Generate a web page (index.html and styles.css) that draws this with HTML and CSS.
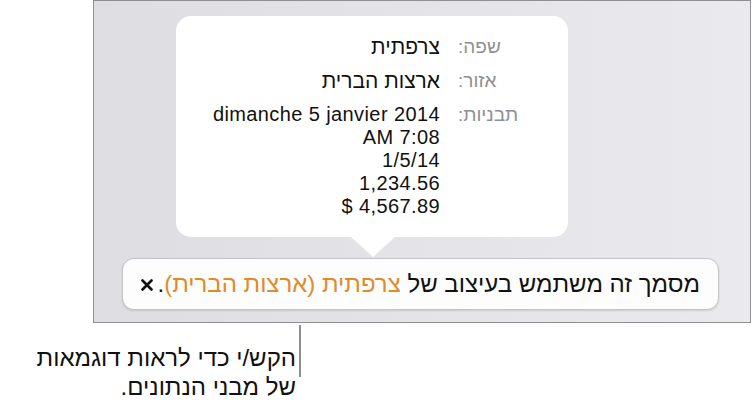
FILE: index.html
```html
<!DOCTYPE html>
<html lang="he">
<head>
    <meta charset="UTF-8">
    <title>תבניות שפה ואזור</title>
    <link rel="stylesheet" href="styles.css">
</head>
<body>
    <div class="frame">
        <div class="popover">
            <div class="row">
                <div class="label">שפה:</div>
                <div class="value heb">צרפתית</div>
            </div>
            <div class="row">
                <div class="label">אזור:</div>
                <div class="value heb">ארצות הברית</div>
            </div>
            <div class="row">
                <div class="label">תבניות:</div>
                <div class="value samples">
                    <div dir="ltr">dimanche 5 janvier 2014</div>
                    <div dir="ltr">AM 7:08</div>
                    <div dir="ltr">1/5/14</div>
                    <div dir="ltr">1,234.56</div>
                    <div dir="ltr">$ 4,567.89</div>
                </div>
            </div>
        </div>

        <div class="notice">
            <div class="notice-text">מסמך זה משתמש בעיצוב של <span class="accent">צרפתית (ארצות הברית)</span>.</div>
            <div class="close">
                <svg width="12" height="12" viewBox="0 0 12 12">
                    <path d="M1.5 1.5 L10.5 10.5 M10.5 1.5 L1.5 10.5" stroke="#111" stroke-width="2.6" stroke-linecap="round"/>
                </svg>
            </div>
        </div>
    </div>

    <div class="callout">
        <div class="callout-line"></div>
        <p class="caption">הקש/י כדי לראות דוגמאות<br>של מבני הנתונים.</p>
    </div>
</body>
</html>
```

FILE: styles.css
```css
body {
    margin: 0;
    font-family: "Liberation Sans", sans-serif;
    color: #111;
    background: #fff;
}
.frame {
    margin-left: 93px;
    width: 658px;
    height: 323px;
    box-sizing: border-box;
    border: 1px solid #8e8e93;
    background: linear-gradient(to right, #dedee2, #eaeaee);
    padding-top: 15px;
}
.popover {
    position: relative;
    margin-left: 82px;
    width: 392px;
    box-sizing: border-box;
    background: #fff;
    border-radius: 15px;
    padding: 19px 40px 19px 0;
    direction: rtl;
    font-size: 20px;
    line-height: 23px;
}
.popover::after {
    content: "";
    position: absolute;
    bottom: -20px;
    left: 175px;
    border-left: 22px solid transparent;
    border-right: 22px solid transparent;
    border-top: 20px solid #fff;
}
.row {
    display: flex;
    gap: 18px;
    margin-bottom: 11px;
}
.row:last-child {
    margin-bottom: 0;
}
.label {
    width: 70px;
    text-align: left;
    color: #8e8e93;
    font-size: 19px;
}
.value {
    flex: 1;
    text-align: right;
}
.value.heb {
    font-size: 21px;
}
.samples {
    letter-spacing: 0.4px;
}
.notice {
    margin-top: 21px;
    margin-left: 28px;
    width: 597px;
    height: 52px;
    box-sizing: border-box;
    background: #fdfdfd;
    border: 1px solid #c4c4c8;
    border-radius: 12px;
    box-shadow: 0 1px 2px rgba(0, 0, 0, 0.12);
    display: flex;
    direction: rtl;
    align-items: center;
    justify-content: space-between;
    padding: 0 18px;
    font-size: 24px;
}
.accent {
    color: #e28a2b;
}
.close {
    display: flex;
    align-items: center;
    padding-top: 2px;
}
.callout {
    position: relative;
}
.callout-line {
    position: absolute;
    left: 299px;
    top: -18px;
    width: 2px;
    height: 52px;
    background: #8e8e8e;
}
.caption {
    margin: 20px 0 0 0;
    width: 296px;
    direction: rtl;
    text-align: right;
    font-size: 24px;
    line-height: 29px;
}
```
